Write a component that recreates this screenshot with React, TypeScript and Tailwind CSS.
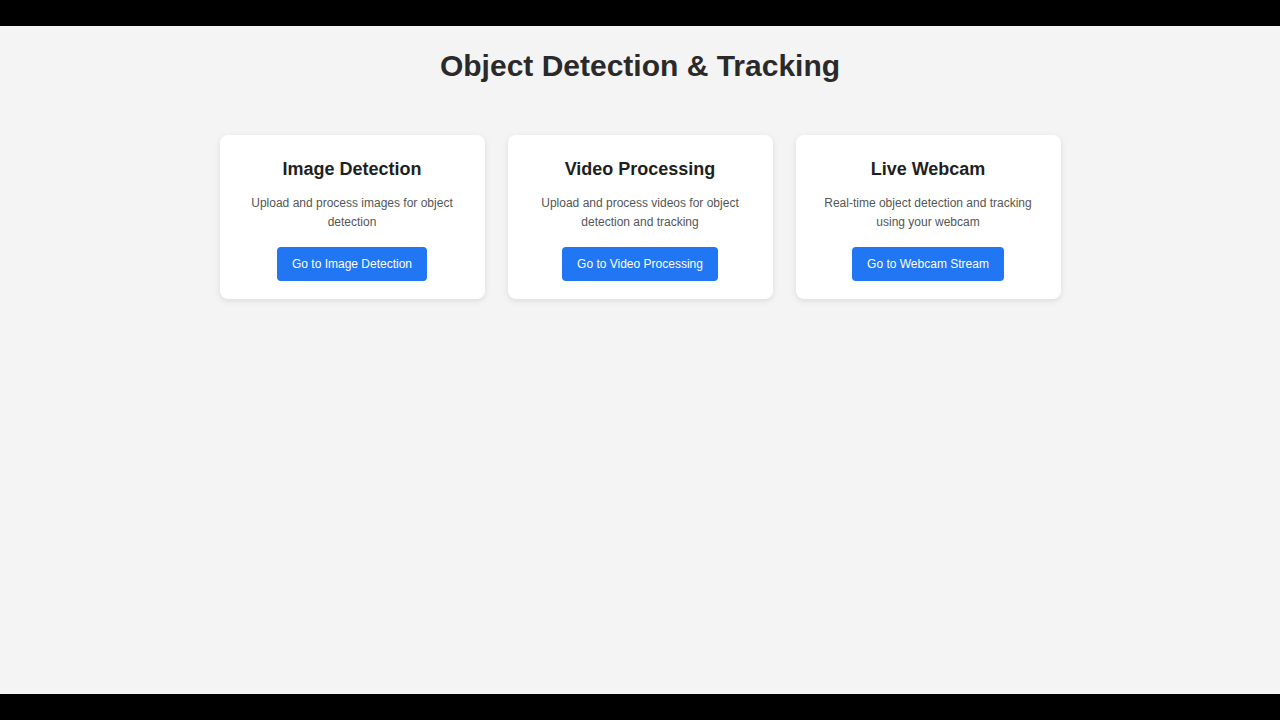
import React from "react";

const cards = [
  {
    title: "Image Detection",
    desc: "Upload and process images for object detection",
    btn: "Go to Image Detection",
  },
  {
    title: "Video Processing",
    desc: "Upload and process videos for object detection and tracking",
    btn: "Go to Video Processing",
  },
  {
    title: "Live Webcam",
    desc: "Real-time object detection and tracking using your webcam",
    btn: "Go to Webcam Stream",
  },
];

export default function App() {
  return (
    <div
      className="flex h-[720px] w-[1280px] flex-col bg-black"
      style={{ fontFamily: '"Liberation Sans", Arial, sans-serif' }}
    >
      <div className="h-[26px] shrink-0" />
      <main className="flex h-[668px] flex-col items-center bg-[#f4f4f4]">
        <h1 className="mt-[22px] text-[30px] font-bold leading-[35px] text-[#2a2a2a]">
          Object Detection &amp; Tracking
        </h1>
        <div className="mt-[52px] flex gap-[23px]">
          {cards.map((c) => (
            <div
              key={c.title}
              className="flex w-[265px] flex-col items-center rounded-lg bg-white px-[20px] pb-[18px] pt-[23px] text-center shadow-[0_2px_6px_rgba(0,0,0,0.1)]"
            >
              <h3 className="text-[18px] font-bold leading-[22px] text-[#1f1f1f]">
                {c.title}
              </h3>
              <p className="mt-[14px] text-[12px] leading-[19px] text-[#555]">
                {c.desc}
              </p>
              <button className="mt-[15px] h-[34px] rounded-[4px] bg-[#2176f4] px-[15px] text-[12px] text-white">
                {c.btn}
              </button>
            </div>
          ))}
        </div>
      </main>
      <div className="flex-1" />
    </div>
  );
}
